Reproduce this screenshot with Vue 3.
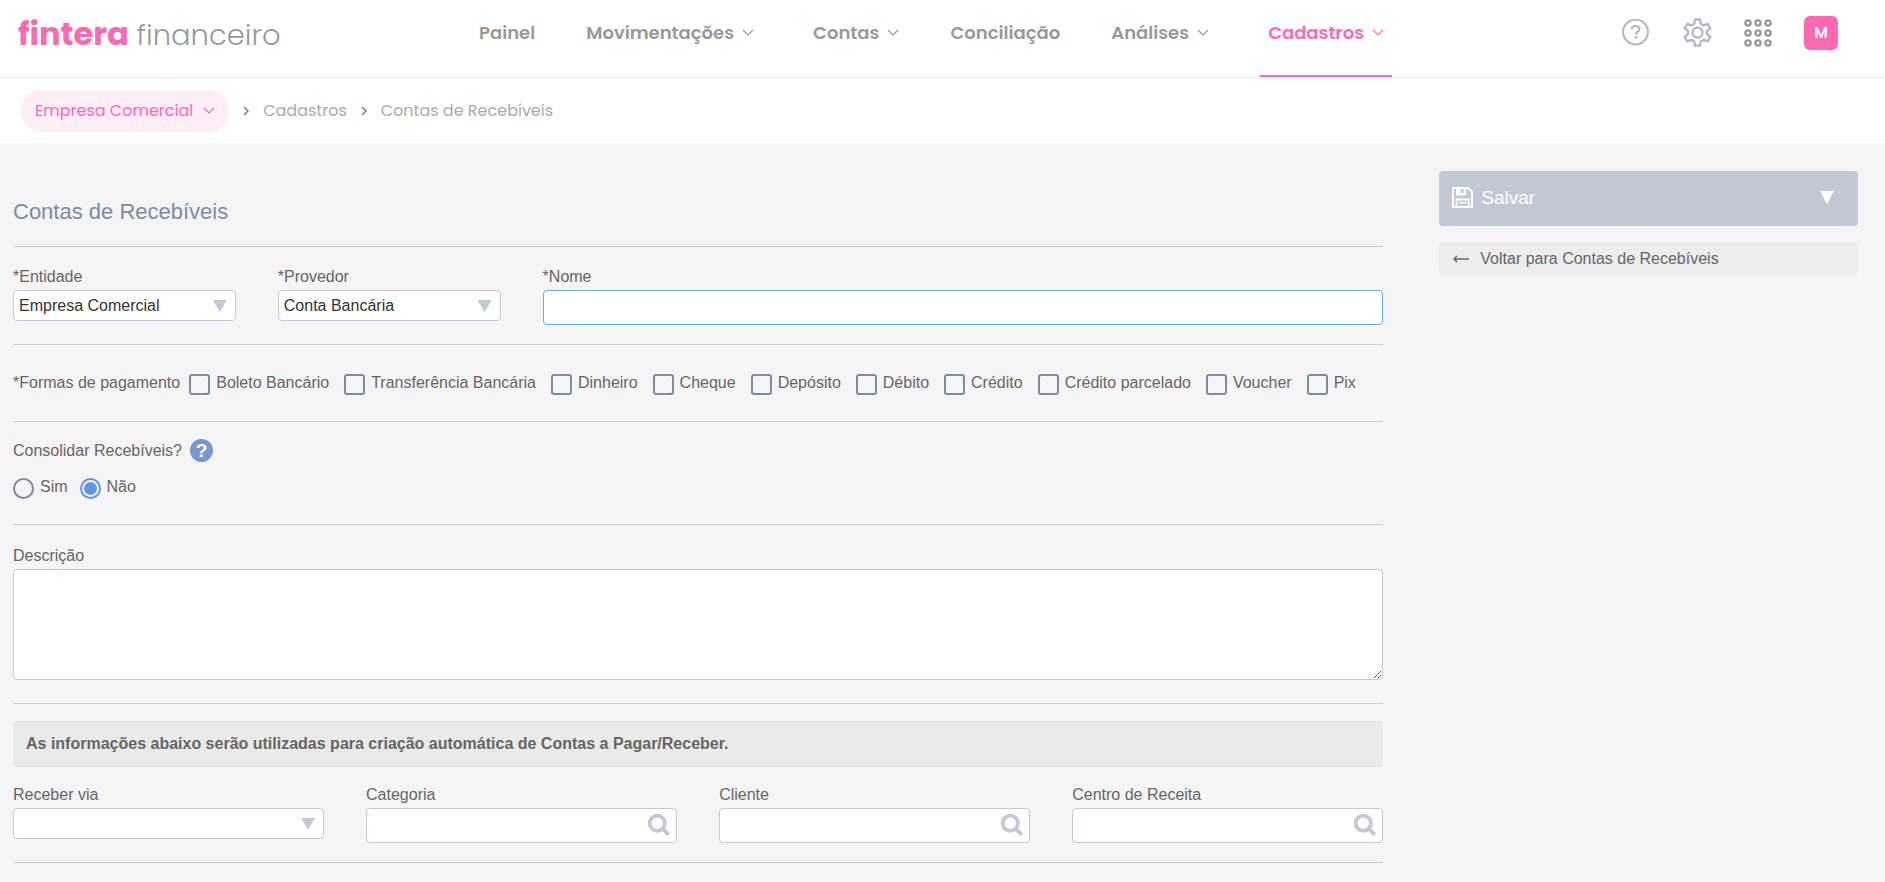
<template>
  <div class="page">
    <header class="topbar">
      <a href="#" class="logo"><strong>fintera</strong> financeiro</a>
      <nav class="menu">
        <a
          v-for="item in menu"
          :key="item.label"
          href="#"
          class="menu-item"
          :class="{ 'menu-item--drop': item.drop, 'menu-item--active': item.active }"
        >
          {{ item.label }}
          <svg v-if="item.drop" class="chevron" viewBox="0 0 12 8"><path d="M1 1l5 5 5-5" /></svg>
        </a>
      </nav>
      <div class="tools">
        <button class="tool" aria-label="Ajuda">
          <svg width="28" height="28" viewBox="0 0 28 28" fill="none" stroke="#b5b5c3" stroke-width="2">
            <circle cx="13.5" cy="13" r="12.4" />
            <path d="M9.700 10.500c0-2.200 1.600-3.500 3.800-3.500s3.800 1.300 3.800 3.300c0 2.600-3.500 2.700-3.500 5.200" stroke-width="2.200" />
            <circle cx="13.800" cy="18.500" r="1.400" fill="#b5b5c3" stroke="none" />
          </svg>
        </button>
        <button class="tool" aria-label="Configurações">
          <svg width="30" height="30" viewBox="0 0 30 30" fill="none" stroke="#b5b5c3" stroke-width="2.3">
            <path d="M13 1.500h5l.8 4.200 2.900 1.700 4-1.500 2.600 4.400-3.300 2.700v3.200l3.300 2.700-2.600 4.400-4-1.500-2.900 1.700-.8 4.200h-5l-.8-4.200-2.900-1.700-4 1.500-2.600-4.400L6 16.200V13l-3.300-2.700 2.600-4.400 4 1.500 2.900-1.700z" />
            <circle cx="15.500" cy="14.600" r="5" />
          </svg>
        </button>
        <button class="tool" aria-label="Aplicativos">
          <svg width="28" height="28" viewBox="0 0 28 28" fill="none" stroke="#999" stroke-width="2.4">
            <template v-for="y in [4, 14, 24]" :key="y">
              <circle v-for="x in [4, 14, 24]" :key="x" :cx="x" :cy="y" r="2.6" />
            </template>
          </svg>
        </button>
        <button class="avatar">M</button>
      </div>
    </header>

    <nav class="crumbs">
      <button class="pill">
        Empresa Comercial
        <svg class="chevron" viewBox="0 0 12 8"><path d="M1 1l5 5 5-5" /></svg>
      </button>
      <template v-for="crumb in crumbs" :key="crumb">
        <svg class="crumb-sep" viewBox="0 0 6 10"><path d="M1 1l4 4-4 4" /></svg>
        <a href="#">{{ crumb }}</a>
      </template>
    </nav>

    <div class="content">
      <form class="form" @submit.prevent>
        <h1>Contas de Recebíveis</h1>

        <section class="block grid">
          <div class="field span-3">
            <label for="entidade">*Entidade</label>
            <div class="select">
              <select id="entidade" v-model="form.entidade">
                <option>Empresa Comercial</option>
              </select>
            </div>
          </div>
          <div class="field span-3">
            <label for="provedor">*Provedor</label>
            <div class="select">
              <select id="provedor" v-model="form.provedor">
                <option>Conta Bancária</option>
              </select>
            </div>
          </div>
          <div class="field span-10">
            <label for="nome">*Nome</label>
            <input id="nome" v-model="form.nome" type="text" class="input input--current" />
          </div>
        </section>

        <section class="block block--formas">
          <span class="formas-title">*Formas de pagamento</span>
          <label v-for="forma in formas" :key="forma" class="choice">
            <input v-model="form.formas" type="checkbox" :value="forma" />
            {{ forma }}
          </label>
        </section>

        <section class="block block--consolidar">
          <div class="question">
            Consolidar Recebíveis?
            <button type="button" class="hint">?</button>
          </div>
          <div class="radios">
            <label v-for="op in ['Sim', 'Não']" :key="op" class="choice">
              <input v-model="form.consolidar" type="radio" name="consolidar" :value="op" />
              {{ op }}
            </label>
          </div>
        </section>

        <section class="block block--descricao field">
          <label for="descricao">Descrição</label>
          <textarea id="descricao" v-model="form.descricao"></textarea>
        </section>

        <section class="block block--auto">
          <p class="notice">
            As informações abaixo serão utilizadas para criação automática de Contas a Pagar/Receber.
          </p>
          <div class="grid">
            <div class="field span-4">
              <label for="receber">Receber via</label>
              <div class="select">
                <select id="receber" v-model="form.receber">
                  <option value=""></option>
                </select>
              </div>
            </div>
            <div v-for="busca in buscas" :key="busca.id" class="field span-4">
              <label :for="busca.id">{{ busca.label }}</label>
              <div class="search">
                <input :id="busca.id" v-model="form[busca.id]" type="text" class="input" />
                <svg class="search-icon" viewBox="0 0 22 22">
                  <circle cx="9.3" cy="9.3" r="7.6" />
                  <path d="M14.8 14.8l6 6" />
                </svg>
              </div>
            </div>
          </div>
        </section>
      </form>

      <aside class="side">
        <button class="save">
          <svg class="disk" viewBox="0 0 21 21">
            <path fill-rule="evenodd" d="M0 0h16.500L21 4.500V21H0zM2 2v17h1.600v-7.400h14V19H19V5.500L15.500 2H14v6.500H4V2zM5.500 13.500V19h10.200v-5.500zM8.700 2v4h3V2z" />
            <path d="M7 15h7.500v1.300H7z" />
          </svg>
          <span>Salvar</span>
          <i class="save-arrow"></i>
        </button>
        <a href="#" class="back">
          <svg class="back-arrow" viewBox="0 0 16 8"><path d="M16 4H1M4 1L1 4l3 3" /></svg>
          Voltar para Contas de Recebíveis
        </a>
      </aside>
    </div>
  </div>
</template>

<script setup>
import { reactive } from 'vue'

const menu = [
  { label: 'Painel' },
  { label: 'Movimentações', drop: true },
  { label: 'Contas', drop: true },
  { label: 'Conciliação' },
  { label: 'Análises', drop: true },
  { label: 'Cadastros', drop: true, active: true },
]

const crumbs = ['Cadastros', 'Contas de Recebíveis']

const formas = [
  'Boleto Bancário',
  'Transferência Bancária',
  'Dinheiro',
  'Cheque',
  'Depósito',
  'Débito',
  'Crédito',
  'Crédito parcelado',
  'Voucher',
  'Pix',
]

const buscas = [
  { id: 'categoria', label: 'Categoria' },
  { id: 'cliente', label: 'Cliente' },
  { id: 'centro', label: 'Centro de Receita' },
]

const form = reactive({
  entidade: 'Empresa Comercial',
  provedor: 'Conta Bancária',
  nome: '',
  formas: [],
  consolidar: 'Não',
  descricao: '',
  receber: '',
  categoria: '',
  cliente: '',
  centro: '',
})
</script>

<style>
body { margin: 0; background: #f5f5f5; }
</style>

<style scoped>
.page {
  font-family: "Liberation Sans", Arial, sans-serif;
  font-size: 16px;
  line-height: 20px;
  color: #666;
}
.page * { box-sizing: border-box; }
a { color: inherit; text-decoration: none; }
button {
  padding: 0;
  border: 0;
  background: none;
  font: inherit;
  color: inherit;
  cursor: pointer;
}

/* topo */
.topbar {
  display: grid;
  grid-template-columns: 461px minmax(0, 913px) 1fr;
  height: 78px;
  padding: 0 47px 0 18px;
  background: #fff;
  border-bottom: 1px solid #ebebeb;
  font-family: Poppins, Inter, sans-serif;
}
.logo {
  padding-top: 12px;
  font-size: 29px;
  line-height: 44px;
  font-weight: 300;
  color: #999;
  white-space: nowrap;
}
.logo strong { font-size: 32px; font-weight: 700; color: #ff69b4; }

.menu { display: flex; justify-content: space-between; }
.menu-item {
  display: flex;
  align-items: center;
  gap: 8px;
  padding-bottom: 10px;
  border-bottom: 2px solid transparent;
  font-size: 18px;
  font-weight: 600;
  color: #999;
  white-space: nowrap;
}
.menu-item--drop { padding-left: 8px; padding-right: 8px; }
.menu-item--active { color: #ff69b4; border-bottom-color: #ff69b4; }

.chevron {
  width: 12px;
  height: 8px;
  fill: none;
  stroke: currentColor;
  stroke-width: 1.2;
}

.tools {
  display: flex;
  justify-content: flex-end;
  align-items: center;
  gap: 32px;
  padding-bottom: 12px;
}
.tool { display: flex; }
.avatar {
  width: 34px;
  height: 34px;
  border-radius: 6px;
  background: #ff69b4;
  color: #fff;
  font-size: 15px;
  font-weight: 600;
}

/* trilha */
.crumbs {
  display: flex;
  align-items: center;
  gap: 14px;
  height: 65px;
  padding: 0 21px;
  background: #fff;
  font-family: Poppins, Inter, sans-serif;
  font-size: 16px;
  color: #aaa;
}
.pill {
  display: flex;
  align-items: center;
  gap: 10px;
  height: 42px;
  padding: 0 14px;
  border-radius: 21px;
  background: #ffeef6;
  color: #ff69b4;
}
.crumb-sep {
  width: 6px;
  height: 10px;
  fill: none;
  stroke: #6b7a99;
  stroke-width: 1.5;
}

/* corpo */
.content {
  display: grid;
  grid-template-columns: 36fr 11fr;
  column-gap: 56px;
  align-items: start;
  padding: 0 27px 0 13px;
}
h1 {
  margin: 0;
  padding: 55px 0 20px;
  font-size: 22px;
  line-height: 28px;
  font-weight: 400;
  color: #7d8ca5;
}
.block { border-top: 1px solid #ccc; padding: 20px 0 19px; }
.grid {
  display: grid;
  grid-template-columns: repeat(16, minmax(0, 1fr));
  column-gap: 42px;
  align-items: start;
}
.span-3 { grid-column: span 3; }
.span-4 { grid-column: span 4; }
.span-10 { grid-column: span 10; }

.field > label { display: block; margin-bottom: 3px; }
.input,
select,
textarea {
  display: block;
  width: 100%;
  border: 1px solid #c3c9d5;
  border-radius: 4px;
  background: #fff;
  color: #333;
  font: inherit;
  outline: none;
}
.input { height: 35px; padding: 0 8px; }
.input--current,
.input:focus { border-color: #66afe9; }
select { height: 31px; padding: 0 28px 0 5px; appearance: none; }
.select, .search { position: relative; }
.select::after {
  content: "";
  position: absolute;
  top: 10px;
  right: 9px;
  width: 14px;
  height: 12px;
  background: #c3c9d5;
  clip-path: polygon(0 0, 100% 0, 50% 100%);
  pointer-events: none;
}
.search-icon {
  position: absolute;
  top: 6px;
  right: 7px;
  width: 22px;
  height: 22px;
  fill: none;
  stroke: #c3c9d5;
  stroke-width: 3.8;
}
textarea { height: 111px; padding: 8px; resize: both; }

.block--formas {
  display: flex;
  flex-wrap: wrap;
  column-gap: 15px;
  padding: 28px 0 26px;
}
.formas-title { margin-right: -6px; }
.choice { display: flex; align-items: flex-start; gap: 6px; white-space: nowrap; }
.choice input {
  appearance: none;
  width: 21px;
  height: 21px;
  margin: 1px 0 0;
  border: 2px solid #7d8ca5;
  border-radius: 3px;
}
.choice input[type="radio"] { border-radius: 50%; }
.choice input:checked {
  border-color: #6196e3;
  background: #6196e3;
  background-clip: content-box;
  padding: 2px;
}

.block--consolidar { padding: 17px 0 25px; }
.question { display: flex; align-items: center; gap: 8px; }
.hint {
  width: 23px;
  height: 23px;
  border-radius: 50%;
  background: #7799cc;
  color: #fff;
  font-size: 19px;
  font-weight: 700;
}
.radios { display: flex; gap: 12px; margin-top: 15px; }

.block--descricao { padding: 21px 0 23px; }
.block--auto { padding-top: 17px; border-bottom: 1px solid #ccc; }
.notice {
  margin: 0 0 18px;
  padding: 13px;
  background: #eaeaea;
  font-weight: 700;
}

/* lateral */
.side { display: flex; flex-direction: column; gap: 16px; padding-top: 28px; }
.save {
  display: flex;
  align-items: center;
  gap: 8px;
  height: 55px;
  padding: 0 24px 2px 13px;
  border-radius: 4px;
  background: #c3c9d4;
  color: #fff;
  font-size: 19px;
}
.disk { width: 21px; height: 21px; fill: #fff; }
.save-arrow {
  width: 14px;
  height: 14px;
  margin-left: auto;
  background: #fff;
  clip-path: polygon(0 0, 100% 0, 50% 100%);
}
.back {
  display: flex;
  align-items: center;
  gap: 11px;
  height: 33px;
  padding: 0 14px;
  border-radius: 4px;
  background: #ededed;
}
.back-arrow { width: 16px; height: 8px; fill: none; stroke: #666; stroke-width: 1.4; }
</style>
